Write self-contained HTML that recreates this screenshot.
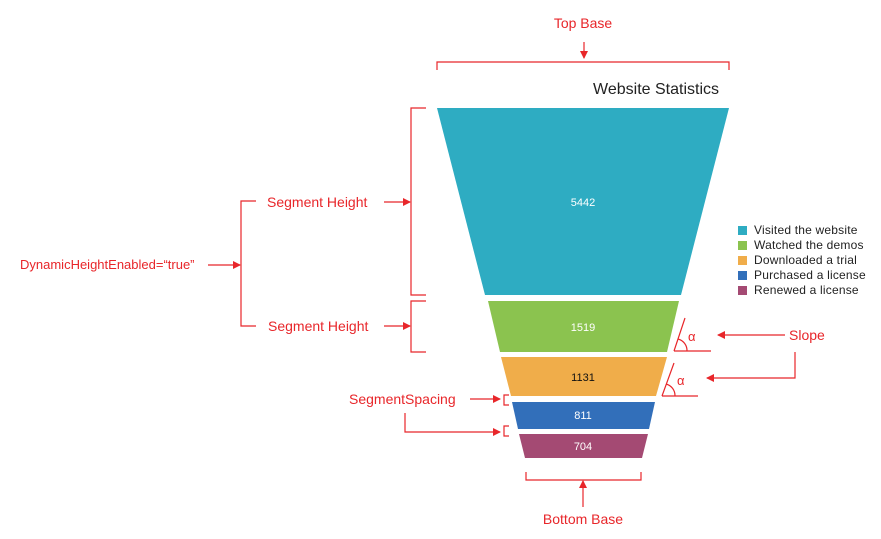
<!DOCTYPE html>
<html><head><style>body{margin:0;background:#fff}svg{display:block}text{font-family:"Liberation Sans",sans-serif}</style></head><body>
<svg width="881" height="539" viewBox="0 0 881 539" xmlns="http://www.w3.org/2000/svg">
<defs><marker id="a" markerWidth="8" markerHeight="8" refX="7" refY="4" orient="auto" markerUnits="userSpaceOnUse"><path d="M0,0 L8,4 L0,8z" fill="#e8262a"/></marker></defs>
<g fill="#e8262a" font-size="14">
<text x="583" y="28" text-anchor="middle">Top Base</text>
<text x="267" y="207">Segment Height</text>
<text x="268" y="331">Segment Height</text>
<text x="20" y="269" font-size="13">DynamicHeightEnabled=“true”</text>
<text x="349" y="404">SegmentSpacing</text>
<text x="583" y="524" text-anchor="middle">Bottom Base</text>
<text x="789" y="340">Slope</text>
<text x="688" y="341" font-size="13">α</text>
<text x="677" y="385" font-size="13">α</text>
</g>
<g stroke="#e8262a" stroke-width="1.2" fill="none">
<path d="M437,70 V62 H729 V70"/>
<path d="M584,42 V58" marker-end="url(#a)"/>
<path d="M426,108 H411 V295 H426"/>
<path d="M426,301 H411 V352 H426"/>
<path d="M384,202 H410" marker-end="url(#a)"/>
<path d="M384,326 H410" marker-end="url(#a)"/>
<path d="M256,201 H241 V326 H256"/>
<path d="M208,265 H240" marker-end="url(#a)"/>
<path d="M674,351 L685,318 M674,351 H711 M678,339 A12,12 0 0 1 687,351"/>
<path d="M662,396 L674,363 M662,396 H698 M666,384 A12,12 0 0 1 675,396"/>
<path d="M785,335 H718" marker-end="url(#a)"/>
<path d="M795,352 V378 H707" marker-end="url(#a)"/>
<path d="M470,399 H500" marker-end="url(#a)"/>
<path d="M509,395 H504 V405 H509"/>
<path d="M405,413 V432 H500" marker-end="url(#a)"/>
<path d="M509,426 H504 V436 H509"/>
<path d="M526,472 V480 H641 V472"/>
<path d="M583,507 V481" marker-end="url(#a)"/>
</g>
<text x="719" y="94" font-size="16" text-anchor="end" fill="#222">Website Statistics</text>
<polygon points="437,108 729,108 681,295 485,295" fill="#2eacc2"/>
<polygon points="488,301 679,301 667,352 500,352" fill="#8bc34f"/>
<polygon points="501,357 667,357 656,396 511,396" fill="#f0ad4a"/>
<polygon points="512,402 655,402 649,429 518,429" fill="#326fba"/>
<polygon points="519,434 648,434 642,458 525,458" fill="#a44a73"/>
<g font-size="11" text-anchor="middle" fill="#fff">
<text x="583" y="206">5442</text>
<text x="583" y="331">1519</text>
<text x="583" y="381" fill="#111">1131</text>
<text x="583" y="419">811</text>
<text x="583" y="450">704</text>
</g>
<g font-size="12" fill="#222" letter-spacing="0.2">
<rect x="738" y="226" width="9" height="9" fill="#2eacc2"/><text x="754" y="234">Visited the website</text>
<rect x="738" y="241" width="9" height="9" fill="#8bc34f"/><text x="754" y="249">Watched the demos</text>
<rect x="738" y="256" width="9" height="9" fill="#f0ad4a"/><text x="754" y="264">Downloaded a trial</text>
<rect x="738" y="271" width="9" height="9" fill="#326fba"/><text x="754" y="279">Purchased a license</text>
<rect x="738" y="286" width="9" height="9" fill="#a44a73"/><text x="754" y="294">Renewed a license</text>
</g>
</svg>
</body></html>
